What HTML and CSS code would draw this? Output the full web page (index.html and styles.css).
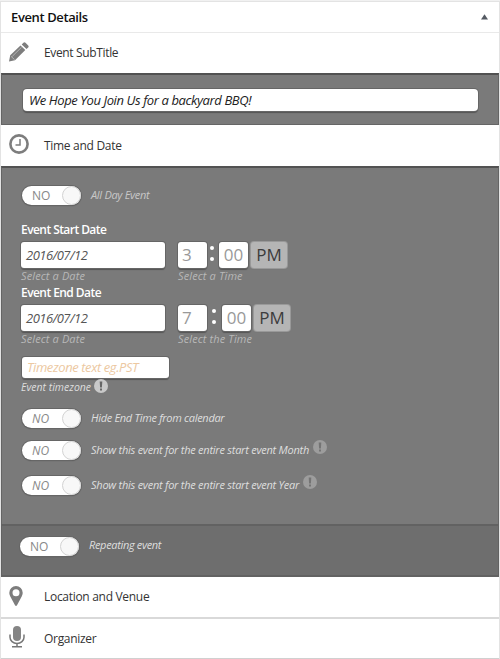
FILE: index.html
```html
<!DOCTYPE html>
<html lang="en">
<head>
<meta charset="utf-8">
<title>Event Details</title>
<link rel="stylesheet" href="styles.css">
</head>
<body>
<main class="panel">
  <header class="panel-head"><h2><span class="t-head">Event Details</span></h2><svg width="7" height="6" viewBox="0 0 7 6"><path d="M3.5 0.3L7 5.5H0z" fill="#555b63"/></svg></header>

  <div class="section-head subtitle-head">
    <svg class="icon" width="20" height="20" viewBox="0 0 20 20"><path fill="#7d7d7d" d="M0 19.500l1.200-6.200L11.500 3.500l4.800 4.600L6 18.200zM12.700 2.400l1.700-1.600q1-1 2.100 0l2.700 2.600q.9 1 0 2l-1.700 1.600z"/><path d="M3.300 14.300L12.500 5.300M2 14.300l3.600 3.400" stroke="#c4c4c4" stroke-width=".8"/></svg>
    <span class="t-sub">Event SubTitle</span>
  </div>
  <section class="dark subtitle-body"><div class="field subtitle-field"><span class="t-bbq">We Hope You Join Us for a backyard BBQ!</span></div></section>

  <div class="section-head time-head">
    <svg class="icon" width="20" height="20" viewBox="0 0 20 20"><circle cx="10" cy="10" r="8.600" fill="none" stroke="#7d7d7d" stroke-width="2.600"/><path d="M11 5v6H6.500" fill="none" stroke="#7d7d7d" stroke-width="1.500"/></svg>
    <span class="t-time">Time and Date</span>
  </div>
  <section class="dark time-body">
    <div class="switch-row all-day"><div class="switch"><span>NO</span><i></i></div><em class="t-allday">All Day Event</em></div>

    <h3><span class="t-start">Event Start Date</span></h3>
    <div class="date-row">
      <div class="field date">2016/07/12</div>
      <div class="clock"><div class="field num">3</div><b class="colon"><i></i><i></i></b><div class="field num">00</div><div class="pm">PM</div></div>
    </div>
    <div class="captions"><em>Select a Date</em><em>Select a Time</em></div>

    <h3 class="end"><span class="t-start">Event End Date</span></h3>
    <div class="date-row">
      <div class="field date">2016/07/12</div>
      <div class="clock late"><div class="field num">7</div><b class="colon"><i></i><i></i></b><div class="field num">00</div><div class="pm">PM</div></div>
    </div>
    <div class="captions"><em>Select a Date</em><em>Select the Time</em></div>

    <div class="field zone"><span class="t-zone">Timezone text eg.PST</span></div>
    <div class="zone-caption"><em>Event timezone</em><svg width="14" height="14" viewBox="0 0 14 14"><circle cx="7" cy="7" r="7" fill="#c9c9c9"/><path d="M5.700 2.500h2.600L7.900 8.500H6.100zM6 9.600h2v2H6z" fill="#666"/></svg></div>

    <div class="switch-row low hide-end"><div class="switch slanted"><span>NO</span><i></i></div><em class="t-hide">Hide End Time from calendar</em></div>
    <div class="switch-row low month"><div class="switch slanted"><span>NO</span><i></i></div><em class="t-span">Show this event for the entire start event Month</em><svg class="hint" width="14" height="14" viewBox="0 0 14 14"><circle cx="7" cy="7" r="7" fill="#9d9d9d"/><path d="M5.700 2.500h2.600L7.900 8.500H6.100zM6 9.600h2v2H6z" fill="#747474"/></svg></div>
    <div class="switch-row low year"><div class="switch slanted"><span>NO</span><i></i></div><em class="t-span">Show this event for the entire start event Year</em><svg class="hint" width="14" height="14" viewBox="0 0 14 14"><circle cx="7" cy="7" r="7" fill="#9d9d9d"/><path d="M5.700 2.500h2.600L7.900 8.500H6.100zM6 9.600h2v2H6z" fill="#747474"/></svg></div>
  </section>
  <section class="repeat-body">
    <div class="switch-row"><div class="switch"><span>NO</span><i></i></div><em class="t-rep">Repeating event</em></div>
  </section>

  <div class="section-head venue-head">
    <svg class="icon" width="20" height="20" viewBox="0 0 20 20"><path fill="#7d7d7d" fill-rule="evenodd" d="M7 0a6.700 6.700 0 0 1 6.700 6.700c0 1.500-.5 2.600-1 3.700L8 19.200q-1 1.500-2 0L1.300 10.400C.8 9.300.3 8.200.3 6.700A6.700 6.700 0 0 1 7 0zM7 3.200a3.500 3.500 0 1 0 0 7a3.500 3.500 0 0 0 0-7z"/></svg>
    <span class="t-venue">Location and Venue</span>
  </div>
  <div class="section-head organizer-head">
    <svg class="icon" width="20" height="22" viewBox="0 0 20 22"><rect x="4" y="0" width="8" height="15" rx="4" fill="#858585"/><path d="M1 8.500v2.700a7 6.300 0 0 0 14 0V8.500M8 17.500v3.500M3 20.800h10" fill="none" stroke="#777" stroke-width="1.500"/></svg>
    <span class="t-venue">Organizer</span>
  </div>
</main>
</body>
</html>
```
FILE: styles.css
```css
* { box-sizing: border-box; }
body {
  margin: 0;
  background: #f1f1f1;
  font: 12px/16px "Open Sans", sans-serif;
  color: #333;
}
.panel {
  height: 658px;
  margin-top: 1px;
  border: 1px solid #e3e3e3;
  border-bottom: 0;
  background: #fff;
  overflow: hidden;
}
.panel span, .panel em { white-space: nowrap; }
.panel-head {
  height: 31px;
  padding: 0 11px 0 10px;
  display: flex;
  align-items: center;
  justify-content: space-between;
  border-bottom: 1px solid #e9e9e9;
}
.panel-head h2 { margin: 0; font-size: 13px; font-weight: 600; color: #111; letter-spacing: -.38px; }
.section-head {
  height: 41px;
  padding-left: 8px;
  display: flex;
  align-items: center;
}
.subtitle-head { height: 40px; }
.venue-head { border-bottom: 2px solid #d9d9d9; height: 42px; }
.organizer-head { border-bottom: 1px solid #d0d0d0; height: 40px; }
.icon { flex: none; margin: 0 15px 2px 0; }
.organizer-head .icon { margin-bottom: 4px; }
.time-head .icon { margin-bottom: 3px; }
.t-sub { letter-spacing: -.35px; }
.t-bbq { letter-spacing: -.39px; }
.t-time, .t-venue, .t-allday, .t-hide { letter-spacing: -.3px; }
.t-start { letter-spacing: -.56px; }
.t-zone { letter-spacing: -.42px; }
.t-span { letter-spacing: -.25px; }
.t-rep { letter-spacing: -.33px; }
.dark { background: #7a7a7a; border: 1px solid #656565; border-top: 2px solid #525252; }
.field {
  background: #fff;
  border-radius: 3px;
  box-shadow: 0 0 0 1px #666, 0 2px 1px #555;
  display: flex;
  align-items: center;
  white-space: nowrap;
}
.subtitle-body { height: 52px; padding: 14px 20px 0 21px; }
.subtitle-field { height: 22px; padding: 0 0 1px 6px; font-size: 13px; font-style: italic; color: #222; border-radius: 4px; }
.time-body { height: 358px; padding: 17px 0 0 19px; border-bottom: 0; }
.switch-row { height: 20px; display: flex; align-items: flex-start; }
.switch-row em, .zone-caption em { font-size: 11px; color: #dedede; line-height: 18px; }
.all-day em { color: #c8c8c8; padding-top: 1px; }
.low em { padding-top: 1px; }
.switch {
  flex: none;
  width: 59px;
  height: 19px;
  margin: 1px 10px 0 1px;
  padding: 0 0 0 10px;
  border-radius: 10px;
  background: #fff;
  box-shadow: 0 0 0 1px #666, 0 1px 1px #484848;
  display: flex;
  align-items: center;
  justify-content: space-between;
  color: #888;
  font-size: 12px;
}
.switch i { width: 19px; height: 19px; border: 1px solid #d3d3d3; border-radius: 50%; background: #f8f8f8; }
.slanted span { font-style: italic; }
h3 { margin: 17px 0 0; height: 20px; font-size: 12px; line-height: 16px; font-weight: 600; color: #fff; }
h3.end { margin-top: 1px; }
.date-row { display: flex; height: 26px; gap: 13px; }
.date { width: 144px; height: 26px; padding-left: 5px; font-size: 13px; font-style: italic; color: #555; letter-spacing: -.5px; }
.clock { display: flex; }
.num { width: 29px; height: 26px; font-size: 17px; color: #999; justify-content: center; }
.num:first-child { padding-left: 4px; justify-content: flex-start; }
.colon { width: 12px; padding: 4px 0 0 3px; display: flex; flex-direction: column; gap: 7px; }
.colon i { width: 4px; height: 4px; border-radius: 50%; background: #fff; }
.late .colon { width: 15px; padding-left: 5px; }
.pm { width: 36px; height: 26px; margin-left: 3px; border-radius: 3px; background: #b5b5b5; box-shadow: 0 0 0 1px #999, 0 1px 1px #666; display: flex; align-items: center; justify-content: center; font-size: 17px; color: #3c3c3c; }
.captions { display: grid; grid-template-columns: 157px 1fr; height: 16px; font-size: 11px; line-height: 16px; color: #b8b8b8; letter-spacing: .12px; }
.zone { width: 147px; height: 21px; margin: 10px 0 0 1px; padding: 0 0 1px 5px; font-size: 13px; font-style: italic; color: #ecc8a1; }
.zone-caption { display: flex; height: 17px; align-items: flex-start; }
.zone-caption em { font-size: 10.500px; }
.zone-caption svg { margin: 1px 0 0 3px; }
.hide-end { margin-top: 13px; }
.month { margin-top: 12px; }
.year { margin-top: 15px; }
.hint { margin: 0 0 0 4px; }
.repeat-body { height: 53px; padding: 10px 0 0 17px; background: #6e6e6e; border: solid #626262; border-width: 2px 1px; }
```
